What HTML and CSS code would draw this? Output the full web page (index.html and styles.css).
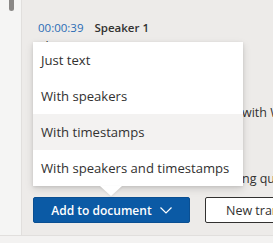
FILE: index.html
```html
<!DOCTYPE html>
<html>
<head>
<meta charset="utf-8">
<link rel="stylesheet" href="styles.css">
</head>
<body>
<div class="app">
  <div class="gutter"><div class="thumb"></div></div>
  <div class="main">
    <div class="entry">
      <div class="meta"><span class="time">00:00:39</span><span class="speaker">Speaker 1</span></div>
      <div class="text">
        <div class="line">Please use Sonos on your server.</div>
        <div class="line">We can review it together</div>
        <div class="line">before the meeting starts.</div>
        <div class="line"><span class="hid">Everyone can now work on it together</span><span class="vis">with Word</span></div>
        <div class="line">and keep the notes in one place.</div>
        <div class="line">Let me know if you have any</div>
        <div class="line"><span class="hid">questions or comments, includi</span><span class="vis">ng questions</span></div>
      </div>
    </div>
    <div class="actions">
      <div class="split">
        <button class="primary">Add to document <svg class="chev" width="12" height="7" viewBox="0 0 12 7"><path d="M0.5 0.5 L6 6 L11.5 0.5" fill="none" stroke="#fff" stroke-width="1.2"/></svg></button>
        <div class="callout">
          <ul class="menu">
            <li>Just text</li>
            <li>With speakers</li>
            <li class="hover">With timestamps</li>
            <li>With speakers and timestamps</li>
          </ul>
          <div class="beak"></div>
        </div>
      </div>
      <button class="secondary">New transcription</button>
    </div>
  </div>
</div>
<div class="footer"></div>
</body>
</html>
```
FILE: styles.css
```css
* { box-sizing: border-box; }
html, body { margin: 0; padding: 0; }
body {
  width: 273px;
  height: 243px;
  overflow: hidden;
  background: #f3f2f1;
  font-family: "Open Sans", "Liberation Sans", sans-serif;
  color: #323130;
}
.app {
  display: flex;
  height: 235px;
}
.gutter {
  width: 22px;
  flex: none;
  background: #f5f5f4;
  border-right: 1px solid #e1dfdd;
}
.thumb {
  margin-left: 9px;
  width: 5px;
  height: 11px;
  background: #8a8886;
  border-radius: 0 0 3px 3px;
}
.main {
  flex: 1;
  background: #edebe9;
  display: flex;
  flex-direction: column;
  min-width: 0;
  overflow: hidden;
}
.entry {
  padding: 20px 0 0 16px;
  height: 197px;
  overflow: hidden;
}
.meta {
  font-size: 11.5px;
  line-height: 16px;
  display: flex;
  gap: 11px;
  white-space: nowrap;
}
.time { color: #2b6cb5; }
.speaker { font-weight: 600; color: #323130; }
.text {
  font-size: 12.5px;
  line-height: 22px;
  margin-top: 0;
}
.line {
  display: flex;
  white-space: nowrap;
}
.hid {
  flex: none;
  width: 204px;
  overflow: hidden;
}
.vis { flex: none; }
.actions {
  display: flex;
  gap: 15px;
  padding-left: 11px;
  align-items: center;
}
.split { position: relative; }
button {
  font-family: inherit;
  height: 26px;
  margin: 0;
  white-space: nowrap;
  border-radius: 2px;
}
.primary {
  width: 157px;
  background: #0b5aa5;
  border: 1px solid #0a4f92;
  color: #fff;
  font-size: 12px;
  font-weight: 600;
  display: flex;
  align-items: center;
  justify-content: center;
  gap: 8px;
  padding: 0;
}
.chev { display: block; }
.secondary {
  background: #fff;
  border: 1px solid #323130;
  color: #323130;
  font-size: 12.5px;
  padding: 0 0 0 20px;
  text-align: left;
  width: 120px;
}
.callout {
  position: absolute;
  left: 0;
  bottom: calc(100% + 11px);
  width: 210px;
}
.menu {
  list-style: none;
  margin: 0;
  padding: 0;
  background: #fff;
  box-shadow: 0 3px 8px rgba(0,0,0,0.13), 0 1px 3px rgba(0,0,0,0.1);
  font-size: 13.1px;
}
.menu li {
  height: 36px;
  line-height: 36px;
  padding-left: 8px;
  white-space: nowrap;
}
.menu li.hover { background: #f3f2f1; }
.beak {
  position: absolute;
  left: 67px;
  top: 100%;
  width: 0;
  height: 0;
  border-left: 11px solid transparent;
  border-right: 11px solid transparent;
  border-top: 10px solid #fff;
  filter: drop-shadow(0 1px 1px rgba(0,0,0,0.08));
}
.footer {
  height: 8px;
  border-top: 1px solid #e1dfdd;
  background: #f3f2f1;
}
```
